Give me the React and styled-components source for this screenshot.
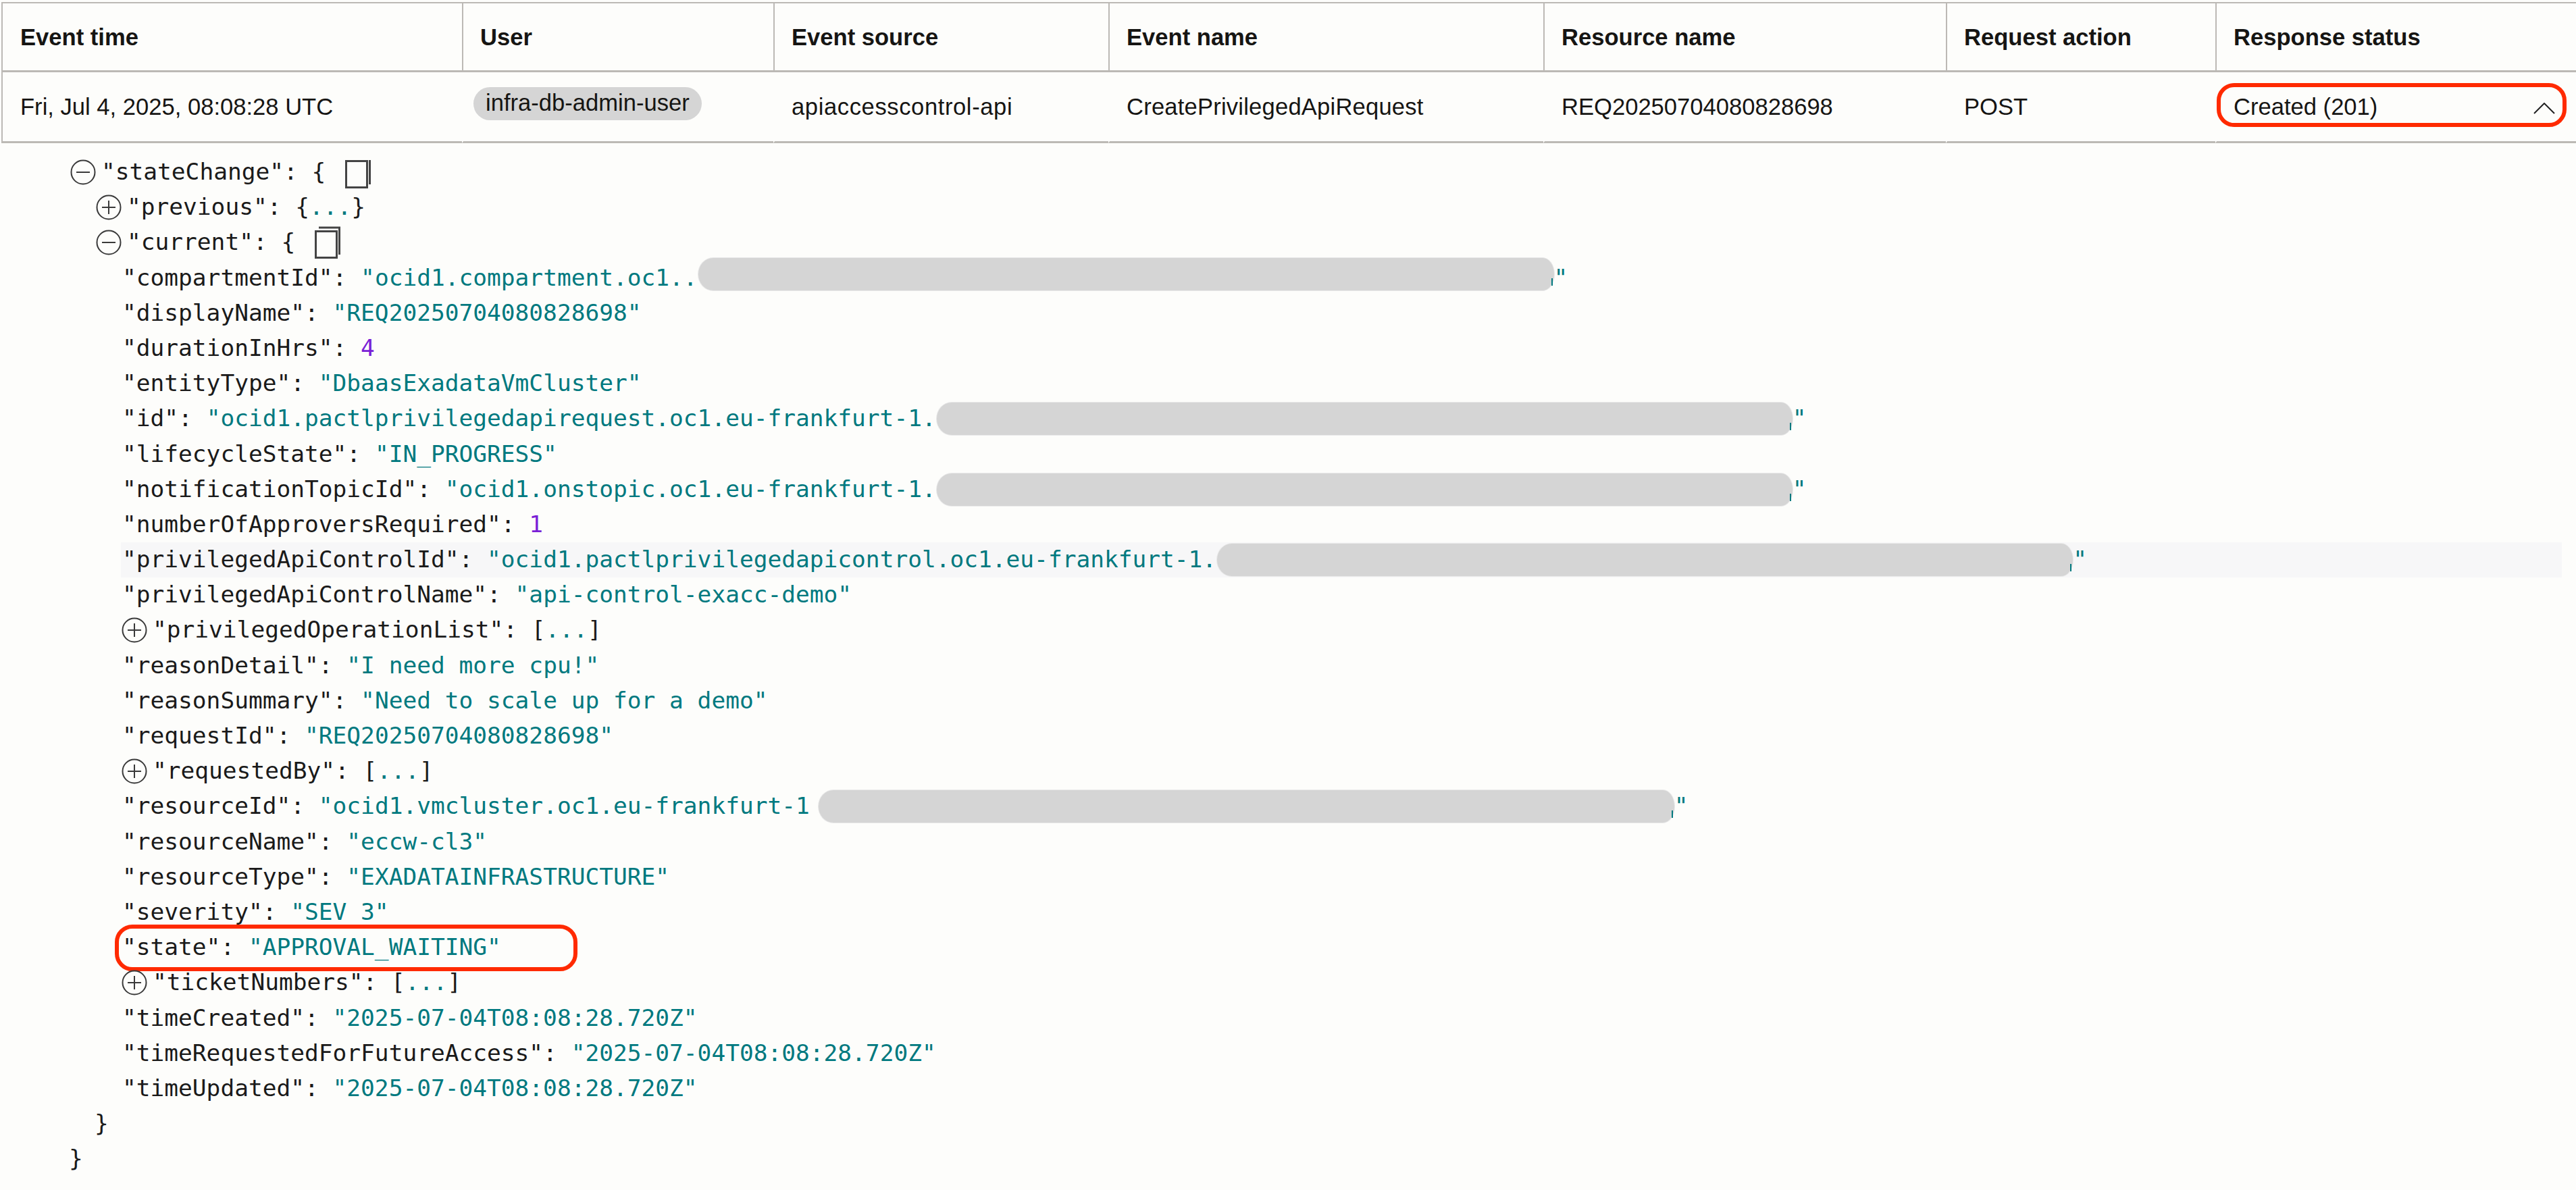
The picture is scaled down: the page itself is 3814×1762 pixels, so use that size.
import React from "react";
import styled, { createGlobalStyle } from "styled-components";

const Global = createGlobalStyle`
  html, body { margin: 0; padding: 0; background: #fdfdfb; }
  body { width: 3814px; height: 1762px; overflow: hidden; }
`;

const Page = styled.div`
  width: 3814px;
  height: 1762px;
  padding: 3px 0 0 2px;
  box-sizing: border-box;
  background: #fdfdfb;
  font-family: "Liberation Sans", Arial, sans-serif;
  font-size: 34.6px;
  color: #161513;
`;

const Grid = styled.div`
  display: grid;
  grid-template-columns: 680px 461px 496px 644px 596px 399px 1fr;
  border-left: 2px solid #bcb9b5;
  border-top: 2px solid #bcb9b5;
`;

const HeadCell = styled.div`
  height: 102px;
  box-sizing: border-box;
  padding: 27px 0 0 ${(p) => (p.$first ? "26px" : "25px")};
  font-weight: 700;
  line-height: 46px;
  border-bottom: 3px solid #bcb9b5;
  border-left: ${(p) => (p.$first ? "none" : "2px solid #bcb9b5")};
`;

const BodyCell = styled.div`
  position: relative;
  height: 105px;
  box-sizing: border-box;
  padding: 28px 0 0 ${(p) => (p.$first ? "26px" : "25px")};
  line-height: 46px;
  letter-spacing: ${(p) => p.$track || "normal"};
  border-bottom: 3px solid #bcb9b5;
  border-left: ${(p) => (p.$first ? "none" : "2px solid transparent")};
`;

const UserCell = styled(BodyCell)`
  padding: 22px 0 0 15px;
`;

const UserPill = styled.div`
  width: fit-content;
  padding: 0 18px;
  height: 49px;
  line-height: 46px;
  border-radius: 25px;
  background: #d5d5d5;
`;

const Chevron = styled.svg`
  position: absolute;
  right: 31px;
  top: 45px;
  width: 32px;
  height: 17px;
`;

const Callout = styled.div`
  position: absolute;
  box-sizing: border-box;
  border: 6px solid #ff2a00;
  border-radius: 26px;
  pointer-events: none;
`;

const StatusCallout = styled(Callout)`
  left: 0;
  top: 16px;
  width: 518px;
  height: 65px;
`;

const StateCallout = styled(Callout)`
  left: -9px;
  top: -8px;
  width: 685px;
  height: 69px;
`;

const Tree = styled.div`
  padding-top: 17px;
  font-family: "DejaVu Sans Mono", "Liberation Mono", monospace;
  font-size: 34.5px;
  color: #1a1a1a;
`;

const Line = styled.div`
  position: relative;
  height: 52.2px;
  line-height: 50px;
  white-space: pre;
  display: flex;
  align-items: flex-start;
  margin: 0 21px 0 ${(p) => (p.$close ? 100 : p.$plain ? 101 : 102) + p.$depth * 38}px;
  padding-left: ${(p) => (p.$plain ? 2 : 0)}px;
  background: ${(p) => (p.$hover ? "#f7f7f8" : "transparent")};
`;

const Value = styled.span`
  color: #00797f;
`;

const Num = styled.span`
  color: #7a1fd6;
`;

const Dots = styled.span`
  color: #00797f;
`;

const Redacted = styled.span`
  position: relative;
  flex: none;
  width: 1267px;
  height: 48px;
  margin: ${(p) => p.$top ?? 2}px 0 0 ${(p) => p.$gap || 1}px;
  border-radius: 22px 17px 17px 22px / 24px;
  background: #d5d5d5;
  box-shadow: 0 0 0 1px #e9e9e9;

  &::after {
    content: "";
    position: absolute;
    right: 2px;
    bottom: 7px;
    width: 2px;
    height: 11px;
    background: #00797f;
  }
`;

const ToggleSvg = styled.svg`
  flex: none;
  width: 38px;
  height: 38px;
  margin: 7px 8px 0 0;
`;

const CopySvg = styled.svg`
  flex: none;
  width: 40px;
  height: 48px;
  margin: 2px 0 0 29px;
`;

const Toggle = ({ open }) => (
  <ToggleSvg viewBox="0 0 38 38" fill="none" stroke="#3a3a3a" strokeWidth="2">
    <circle cx="19" cy="19" r="17.5" />
    <path d="M9 19h20" />
    {!open && <path d="M19 9v20" />}
  </ToggleSvg>
);

const Copy = ({ top }) => (
  <CopySvg viewBox="0 0 40 48" fill="none" stroke="#444">
    <rect x="1.5" y="7.5" width="31" height="39" strokeWidth="3" />
    {top && <path d="M6 2h32" strokeWidth="3" />}
    <path d={top ? "M36.5 1v41" : "M36.5 6v36"} strokeWidth="3" />
  </CopySvg>
);

const heads = ["Event time", "User", "Event source", "Event name", "Resource name", "Request action", "Response status"];

export default function App() {
  return (
    <Page>
      <Global />
      <Grid>
        {heads.map((h, i) => (
          <HeadCell key={h} $first={i === 0}>{h}</HeadCell>
        ))}
        <BodyCell $first>Fri, Jul 4, 2025, 08:08:28 UTC</BodyCell>
        <UserCell><UserPill>infra-db-admin-user</UserPill></UserCell>
        <BodyCell $track="0.6px">apiaccesscontrol-api</BodyCell>
        <BodyCell $track="0.2px">CreatePrivilegedApiRequest</BodyCell>
        <BodyCell>REQ20250704080828698</BodyCell>
        <BodyCell>POST</BodyCell>
        <BodyCell>
          Created (201)
          <StatusCallout />
          <Chevron viewBox="0 0 32 17" fill="none" stroke="#222" strokeWidth="2"><path d="M1 16 16 1l15 15" /></Chevron>
        </BodyCell>
      </Grid>
      <Tree>
        <Line $depth={0}><Toggle open />{'"stateChange": {'}<Copy /></Line>
        <Line $depth={1}><Toggle />{'"previous": {'}<Dots>...</Dots>{'}'}</Line>
        <Line $depth={1}><Toggle open />{'"current": {'}<Copy top /></Line>
        <Line $depth={2} $plain>{'"compartmentId": '}<Value>"ocid1.compartment.oc1..</Value><Redacted $top={-4} /><Value>"</Value></Line>
        <Line $depth={2} $plain>{'"displayName": '}<Value>"REQ20250704080828698"</Value></Line>
        <Line $depth={2} $plain>{'"durationInHrs": '}<Num>4</Num></Line>
        <Line $depth={2} $plain>{'"entityType": '}<Value>"DbaasExadataVmCluster"</Value></Line>
        <Line $depth={2} $plain>{'"id": '}<Value>"ocid1.pactlprivilegedapirequest.oc1.eu-frankfurt-1.</Value><Redacted /><Value>"</Value></Line>
        <Line $depth={2} $plain>{'"lifecycleState": '}<Value>"IN_PROGRESS"</Value></Line>
        <Line $depth={2} $plain>{'"notificationTopicId": '}<Value>"ocid1.onstopic.oc1.eu-frankfurt-1.</Value><Redacted /><Value>"</Value></Line>
        <Line $depth={2} $plain>{'"numberOfApproversRequired": '}<Num>1</Num></Line>
        <Line $depth={2} $plain $hover>{'"privilegedApiControlId": '}<Value>"ocid1.pactlprivilegedapicontrol.oc1.eu-frankfurt-1.</Value><Redacted /><Value>"</Value></Line>
        <Line $depth={2} $plain>{'"privilegedApiControlName": '}<Value>"api-control-exacc-demo"</Value></Line>
        <Line $depth={2}><Toggle />{'"privilegedOperationList": ['}<Dots>...</Dots>{']'}</Line>
        <Line $depth={2} $plain>{'"reasonDetail": '}<Value>"I need more cpu!"</Value></Line>
        <Line $depth={2} $plain>{'"reasonSummary": '}<Value>"Need to scale up for a demo"</Value></Line>
        <Line $depth={2} $plain>{'"requestId": '}<Value>"REQ20250704080828698"</Value></Line>
        <Line $depth={2}><Toggle />{'"requestedBy": ['}<Dots>...</Dots>{']'}</Line>
        <Line $depth={2} $plain>{'"resourceId": '}<Value>"ocid1.vmcluster.oc1.eu-frankfurt-1</Value><Redacted $gap={13} /><Value>"</Value></Line>
        <Line $depth={2} $plain>{'"resourceName": '}<Value>"eccw-cl3"</Value></Line>
        <Line $depth={2} $plain>{'"resourceType": '}<Value>"EXADATAINFRASTRUCTURE"</Value></Line>
        <Line $depth={2} $plain>{'"severity": '}<Value>"SEV_3"</Value></Line>
        <Line $depth={2} $plain>{'"state": '}<Value>"APPROVAL_WAITING"</Value><StateCallout /></Line>
        <Line $depth={2}><Toggle />{'"ticketNumbers": ['}<Dots>...</Dots>{']'}</Line>
        <Line $depth={2} $plain>{'"timeCreated": '}<Value>"2025-07-04T08:08:28.720Z"</Value></Line>
        <Line $depth={2} $plain>{'"timeRequestedForFutureAccess": '}<Value>"2025-07-04T08:08:28.720Z"</Value></Line>
        <Line $depth={2} $plain>{'"timeUpdated": '}<Value>"2025-07-04T08:08:28.720Z"</Value></Line>
        <Line $depth={1} $close>{'}'}</Line>
        <Line $depth={0} $close>{'}'}</Line>
      </Tree>
    </Page>
  );
}
